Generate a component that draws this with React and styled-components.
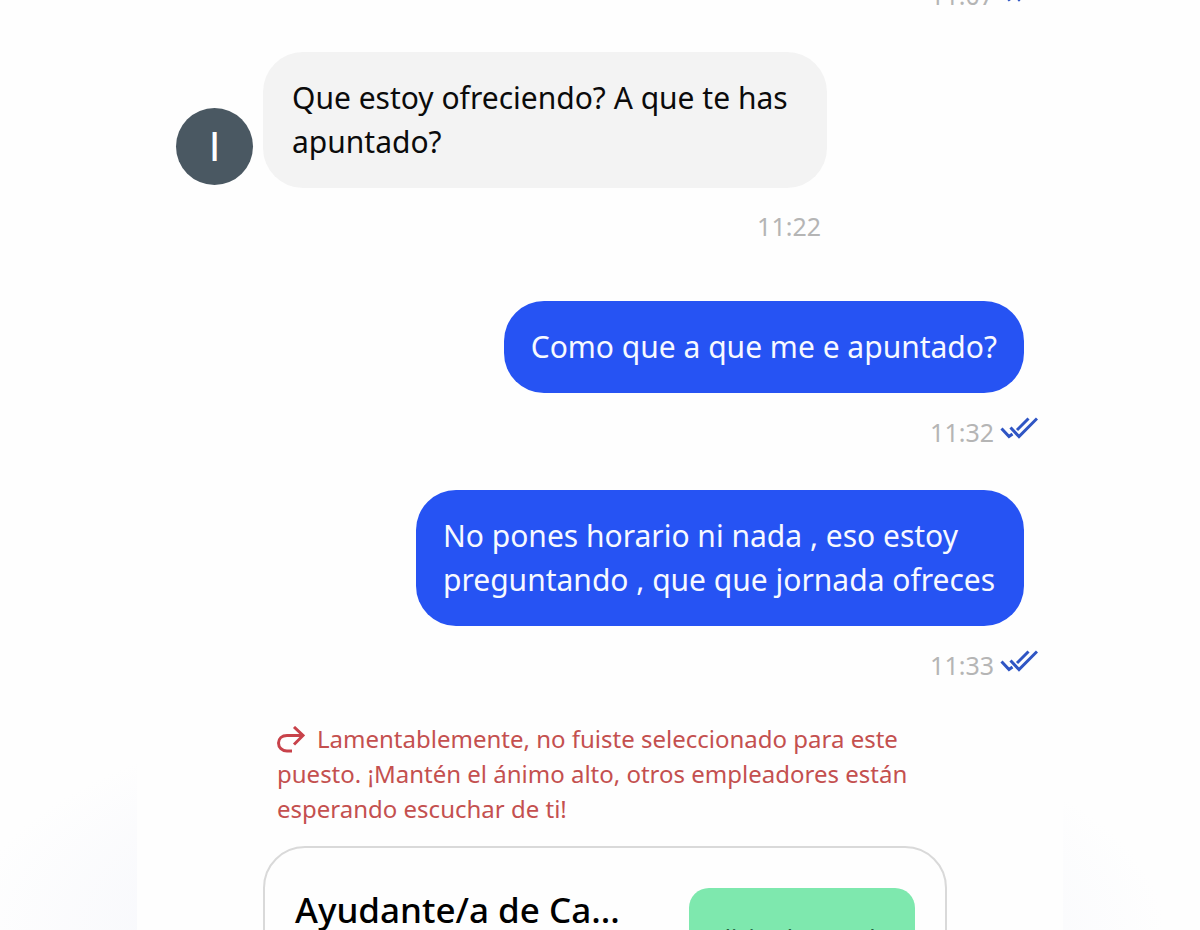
import React from "react";
import styled, { createGlobalStyle, css } from "styled-components";

const GlobalStyle = createGlobalStyle`
  * { box-sizing: border-box; }
  body {
    margin: 0;
    background: #fefefe;
    font-family: "Noto Sans", "Open Sans", sans-serif;
    color: #0b0b0b;
  }
`;

const Page = styled.div`
  height: 100vh;
  overflow: hidden;
  padding: 0 137px;
  background: radial-gradient(ellipse 50% 240px at 47% 100%, #f5f6fb 50%, #fefefe 100%);
`;

const Thread = styled.main`
  display: flex;
  flex-direction: column;
  min-height: 100%;
  margin-top: -23px;
  padding: 0 39px;
  background: #fefefe;
`;

const spaceAfter = { previous: "39px", own: "40px", incoming: "57px" };

const Message = styled.article`
  display: flex;
  flex-direction: column;
  align-items: ${({ $kind }) => ($kind === "incoming" ? "flex-start" : "flex-end")};
  gap: 21px;
  margin-bottom: ${({ $kind }) => spaceAfter[$kind]};
`;

const Incoming = styled.div`
  display: flex;
  flex-direction: column;
  align-items: flex-end;
  gap: 20px;
`;

const Row = styled.div`
  display: flex;
  align-items: flex-end;
  gap: 10px;
`;

const Avatar = styled.div`
  display: grid;
  place-items: center;
  width: 77px;
  height: 77px;
  margin-bottom: 3px;
  border-radius: 50%;
  background: #4a5862;
  color: #fff;
  font: 400 42px/48px "Liberation Sans", sans-serif;
`;

const Bubble = styled.p`
  margin: 0;
  border-radius: 40px;
  font-size: 30px;
  line-height: 44px;
  ${({ $own }) =>
    $own
      ? css`
          max-width: 608px;
          padding: 24px 27px;
          background: #2653f3;
          color: #f7f9ff;
        `
      : css`
          max-width: 564px;
          padding: 24px 29px;
          background: #f3f3f3;
        `}
`;

const Meta = styled.div`
  display: flex;
  align-items: center;
  gap: 6px;
  height: 36px;
  margin-right: ${({ $own }) => ($own ? "-14px" : "6px")};
  color: #b5b5b5;
  font-size: 25px;
  line-height: 36px;
`;

const ReadMark = styled.svg`
  width: 38px;
  height: 22px;
  margin-bottom: 8px;
  fill: none;
  stroke: #2f55c4;
  stroke-width: 3;
`;

const Notice = styled.p`
  max-width: 650px;
  margin: -2px 0 20px 101px;
  color: #c4504f;
  font-size: 24px;
  line-height: 35px;
`;

const NoticeArrow = styled.svg`
  width: 28px;
  height: 27px;
  margin-right: 12px;
  vertical-align: -5px;
  fill: none;
  stroke: #c8424a;
  stroke-width: 3;
`;

const JobCard = styled.section`
  display: flex;
  justify-content: space-between;
  align-items: flex-start;
  width: 684px;
  margin-left: 87px;
  padding: 40px 30px 48px;
  border: 2px solid #d9d9d9;
  border-radius: 42px;
`;

const JobTitle = styled.h2`
  margin: 0;
  color: #000;
  font-size: 35px;
  font-weight: 500;
  line-height: 44px;
`;

const StatusButton = styled.button`
  width: 226px;
  padding: 32px 8px;
  border: 0;
  border-radius: 20px;
  background: #7ee8ae;
  color: #26603f;
  font: 400 24px/36px "Noto Sans", sans-serif;
  text-align: left;
  white-space: nowrap;
`;

function Stamp({ time, own }) {
  return (
    <Meta $own={own}>
      <time>{time}</time>
      {own && (
        <ReadMark viewBox="0 0 38 22" role="img" aria-label="Leído">
          <path d="M1.500 11.500 9 19.500 12.500 17M10.500 10.500 19 19.500 37 1.500M17 13 28.500 1.500" />
        </ReadMark>
      )}
    </Meta>
  );
}

export default function App() {
  return (
    <>
      <GlobalStyle />
      <Page>
        <Thread>
          <Message $kind="previous">
            <Stamp time="11:07" own />
          </Message>
          <Message $kind="incoming">
            <Incoming>
              <Row>
                <Avatar>I</Avatar>
                <Bubble>Que estoy ofreciendo? A que te has apuntado?</Bubble>
              </Row>
              <Stamp time="11:22" />
            </Incoming>
          </Message>
          <Message $kind="own">
            <Bubble $own>Como que a que me e apuntado?</Bubble>
            <Stamp time="11:32" own />
          </Message>
          <Message $kind="own">
            <Bubble $own>No pones horario ni nada , eso estoy preguntando , que que jornada ofreces</Bubble>
            <Stamp time="11:33" own />
          </Message>
          <Notice>
            <NoticeArrow viewBox="0 0 28 27" aria-hidden="true">
              <path d="M15 25H10C5 25 1.500 21.500 1.500 17S5 9.500 10 9.500H26M17 1 26 9.500 17 18.500" />
            </NoticeArrow>
            Lamentablemente, no fuiste seleccionado para este puesto. ¡Mantén el ánimo alto, otros empleadores están esperando escuchar de ti!
          </Notice>
          <JobCard>
            <JobTitle>Ayudante/a de Ca...</JobTitle>
            <StatusButton type="button">Solicitud Cerrada</StatusButton>
          </JobCard>
        </Thread>
      </Page>
    </>
  );
}
